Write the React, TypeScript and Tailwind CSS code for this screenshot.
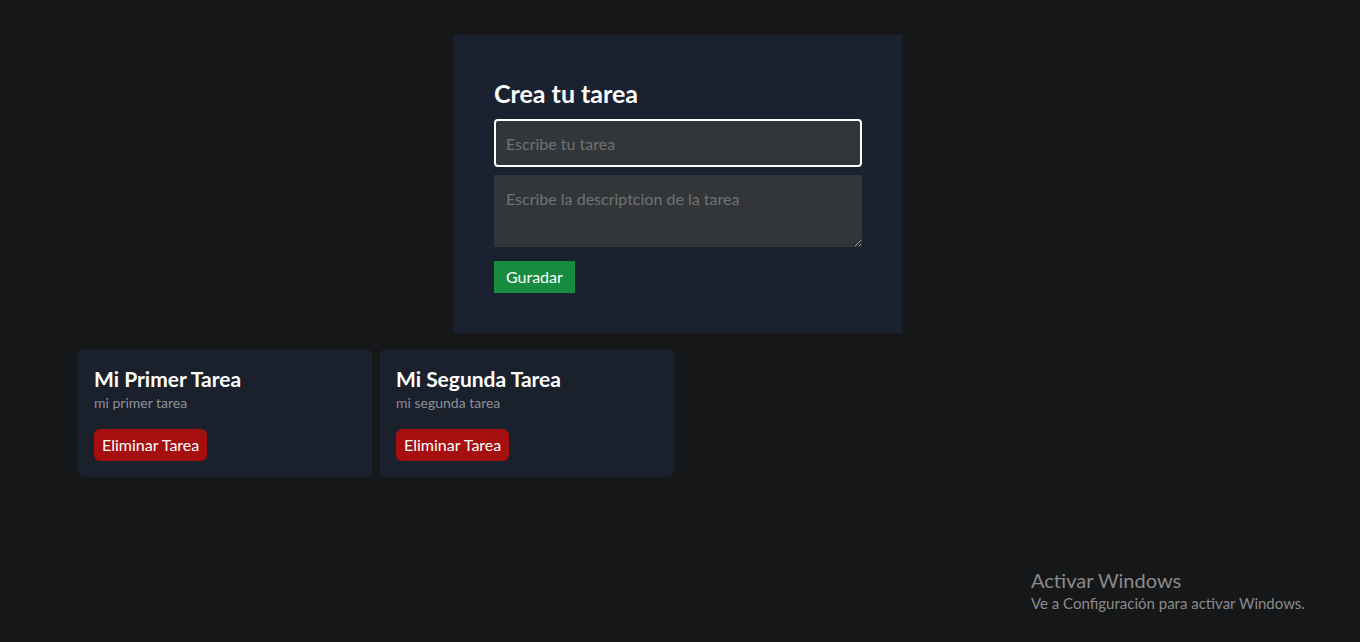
import React from 'react';

const tasks = [
  { id: 1, title: 'Mi Primer Tarea', description: 'mi primer tarea' },
  { id: 2, title: 'Mi Segunda Tarea', description: 'mi segunda tarea' },
];

function TaskForm() {
  return (
    <form className="w-[448px] bg-[#1a2231] p-10" onSubmit={(e) => e.preventDefault()}>
      <h1 className="text-[25px] leading-9 font-bold text-white mb-2">Crea tu tarea</h1>
      <input
        placeholder="Escribe tu tarea"
        className="w-full h-12 bg-[#323638] border-2 border-white rounded px-[10px] text-base text-white placeholder:text-[#6f7376] outline-none mb-2"
      />
      <textarea
        placeholder="Escribe la descriptcion de la tarea"
        className="block w-full h-[72px] bg-[#323638] px-3 py-3 text-base text-white placeholder:text-[#6f7376] outline-none mb-[14px]"
      />
      <button className="bg-[#178c3f] text-white px-3 py-1 text-base">Guradar</button>
    </form>
  );
}

function TaskCard({ title, description }: { title: string; description: string }) {
  return (
    <div className="bg-[#1b212c] rounded-md p-4">
      <h2 className="text-[21px] leading-7 font-bold text-white">{title}</h2>
      <p className="text-sm text-[#8b9099]">{description}</p>
      <button className="mt-4 bg-[#a60f0f] text-white rounded-md px-2 py-1 text-base">Eliminar Tarea</button>
    </div>
  );
}

export default function App() {
  return (
    <div className="min-h-[642px] bg-[#161719] font-['Lato',sans-serif] relative">
      <div className="flex flex-col items-center pt-[35px] pr-1">
        <TaskForm />
        <div className="grid grid-cols-4 gap-2 w-[1200px] mt-4">
          {tasks.map((t) => (
            <TaskCard key={t.id} title={t.title} description={t.description} />
          ))}
        </div>
      </div>

      <div className="absolute left-[1031px] top-[567px] text-[#8a8a8a]">
        <p className="text-[20px] leading-[26px]">Activar Windows</p>
        <p className="text-[15px] leading-5">Ve a Configuración para activar Windows.</p>
      </div>
    </div>
  );
}
